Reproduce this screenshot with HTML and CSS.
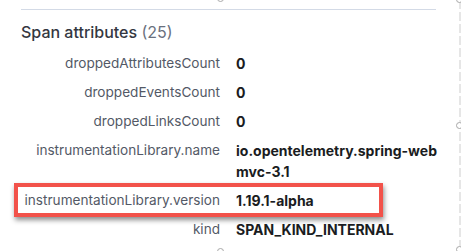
FILE: index.html
```html
<!DOCTYPE html>
<html>
<head>
    <title>Span attributes</title>
    <link rel="stylesheet" href="styles.css">
</head>
<body>
    <div class="timeline">
        <span class="dot dot-top"></span>
        <span class="dot dot-mid"></span>
        <span class="dot dot-bottom"></span>
    </div>
    <span class="knob knob-top"></span>
    <span class="knob knob-bottom"></span>

    <div class="panel">
        <h3 class="title">Span attributes <span class="count">(25)</span></h3>

        <div class="attrs">
            <div class="row">
                <div class="key">droppedAttributesCount</div>
                <div class="val">0</div>
            </div>
            <div class="row">
                <div class="key">droppedEventsCount</div>
                <div class="val">0</div>
            </div>
            <div class="row">
                <div class="key">droppedLinksCount</div>
                <div class="val">0</div>
            </div>
            <div class="row">
                <div class="key">instrumentationLibrary.name</div>
                <div class="val">io.opentelemetry.spring-web<wbr>mvc-3.1</div>
            </div>
            <div class="row highlighted">
                <div class="key">instrumentationLibrary.version</div>
                <div class="val">1.19.1-alpha</div>
                <span class="callout"></span>
            </div>
            <div class="row">
                <div class="key">kind</div>
                <div class="val">SPAN_KIND_INTERNAL</div>
            </div>
        </div>
    </div>
</body>
</html>
```

FILE: styles.css
```css
body {
    margin: 0;
    background: #fff;
    font-family: Inter, "Liberation Sans", sans-serif;
    overflow: hidden;
}
.panel {
    width: 415px;
    margin-left: 21px;
    margin-top: 9px;
    border-top: 1px solid #d3dae6;
}
.title {
    margin: 10px 0 5px 0;
    font-size: 16px;
    line-height: 24px;
    font-weight: 500;
    color: #343741;
}
.count {
    font-weight: 400;
    color: #69707d;
}
.row {
    position: relative;
    display: grid;
    grid-template-columns: 199px 201px;
    column-gap: 16px;
    padding: 4px 0;
    font-size: 14px;
    line-height: 21px;
}
.key {
    text-align: right;
    font-size: 13.6px;
    color: #535966;
}
.val {
    font-weight: 700;
    color: #1a1c21;
}
.callout {
    position: absolute;
    left: -7px;
    top: -3px;
    width: 361px;
    height: 26px;
    border: 4px solid #f2524a;
    box-shadow: 1px 3px 5px rgba(0, 0, 0, 0.45);
    pointer-events: none;
}
.timeline {
    position: absolute;
    left: 459px;
    top: 0;
    width: 2px;
    height: 251px;
    background: repeating-linear-gradient(to bottom, #e6e6e6 0 9px, #fff 9px 12px);
}
.dot, .knob {
    position: absolute;
    width: 5px;
    height: 5px;
    border: 1px solid #a8a8a8;
    border-radius: 50%;
    background: #fff;
}
.dot { left: -3px; }
.dot-top { top: -4px; }
.dot-mid { top: 122px; }
.dot-bottom { top: 246px; }
.knob-top { left: 217px; top: -5px; }
.knob-bottom { left: 217px; top: 248px; }
```
